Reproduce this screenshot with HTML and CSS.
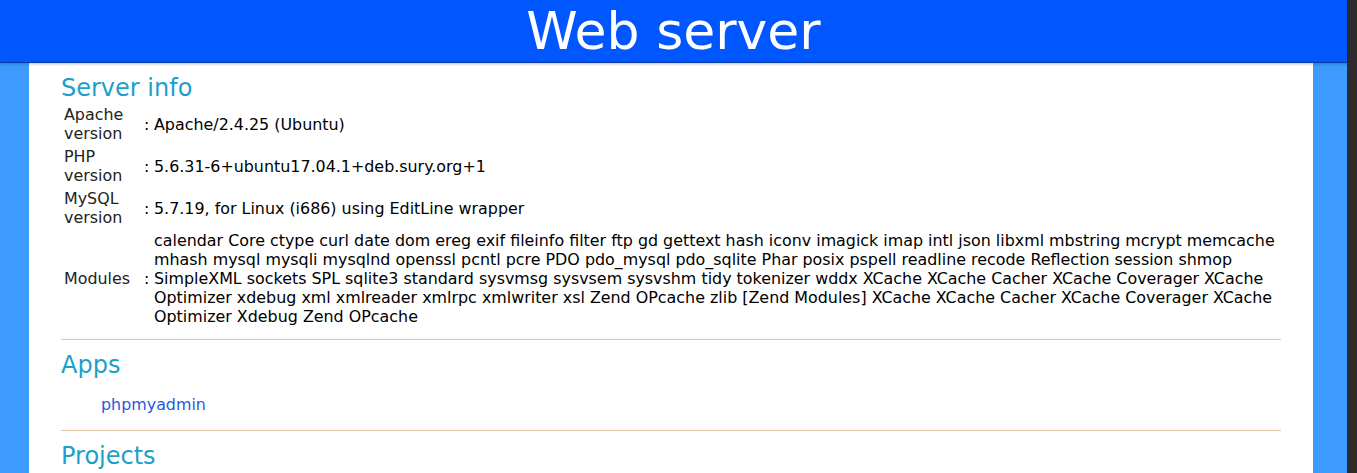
FILE: index.html
```html
<!DOCTYPE html>
<html>
<head>
<meta charset="utf-8">
<title>Web server</title>
<link rel="stylesheet" href="styles.css">
</head>
<body>
<div class="viewport">
  <div class="page">
    <header class="topbar"><h1 class="title">Web server</h1></header>
    <div class="backdrop">
      <main class="panel">
        <h2 class="section-title">Server info</h2>
        <table class="info">
          <tr><td class="label">Apache version</td><td class="colon">:</td><td class="value">Apache/2.4.25 (Ubuntu)</td></tr>
          <tr><td class="label">PHP version</td><td class="colon">:</td><td class="value">5.6.31-6+ubuntu17.04.1+deb.sury.org+1</td></tr>
          <tr><td class="label">MySQL version</td><td class="colon">:</td><td class="value">5.7.19, for Linux (i686) using EditLine wrapper</td></tr>
          <tr><td class="label">Modules</td><td class="colon">:</td><td class="value">calendar Core ctype curl date dom ereg exif fileinfo filter ftp gd gettext hash iconv imagick imap intl json libxml mbstring mcrypt memcache mhash mysql mysqli mysqlnd openssl pcntl pcre PDO pdo_mysql pdo_sqlite Phar posix pspell readline recode Reflection session shmop SimpleXML sockets SPL sqlite3 standard sysvmsg sysvsem sysvshm tidy tokenizer wddx XCache XCache Cacher XCache Coverager XCache Optimizer xdebug xml xmlreader xmlrpc xmlwriter xsl Zend OPcache zlib [Zend Modules] XCache XCache Cacher XCache Coverager XCache Optimizer Xdebug Zend OPcache</td></tr>
        </table>
        <hr class="rule">
        <h2 class="section-title">Apps</h2>
        <ul class="links">
          <li><a class="link" href="#">phpmyadmin</a></li>
        </ul>
        <hr class="rule">
        <h2 class="section-title">Projects</h2>
      </main>
    </div>
  </div>
  <div class="scrollbar"></div>
</div>
</body>
</html>
```
FILE: styles.css
```css
html, body {
  margin: 0;
  padding: 0;
  height: 473px;
  overflow: hidden;
}
body {
  font-family: "DejaVu Sans", sans-serif;
  font-size: 15.9px;
  line-height: 19px;
  color: #000;
  background: #3d9bff;
}
.viewport {
  display: flex;
  height: 473px;
}
.page {
  flex: 1;
  display: flex;
  flex-direction: column;
  background: #3d9bff;
  min-width: 0;
}
.scrollbar {
  width: 10px;
  background: #2c2c2c;
}
.topbar {
  position: relative;
  z-index: 2;
  background: #0057ff;
  border-bottom: 1px solid #0a3aa8;
  box-shadow: 0 1px 3px rgba(0, 0, 0, 0.25);
}
.title {
  margin: 0;
  height: 62px;
  line-height: 62px;
  font-size: 52px;
  font-weight: normal;
  color: #fff;
  text-align: center;
}
.backdrop {
  flex: 1;
  padding: 0 34px 0 29px;
}
.panel {
  display: block;
  background: #fff;
  padding: 0 32px;
  height: 100%;
  overflow: hidden;
}
.section-title {
  margin: 11px 0 0;
  font-size: 24px;
  line-height: 28px;
  font-weight: normal;
  color: #1c9fcb;
}
.info {
  width: 100%;
  border-spacing: 2px;
  font-size: 15.9px;
  line-height: 19px;
}
.info td {
  padding: 1px;
  vertical-align: middle;
}
.label {
  width: 76px;
  color: #222;
}
.colon {
  width: 6px;
}
.rule {
  border: 0;
  border-top: 1px solid #e2c4a6;
  box-shadow: 0 -1px 2px #fdf6ee;
  margin: 10px 0;
  height: 0;
}
.links {
  list-style: none;
  margin: 16px 0;
  padding-left: 40px;
}
.link {
  color: #2b58d9;
  text-decoration: none;
}
```
